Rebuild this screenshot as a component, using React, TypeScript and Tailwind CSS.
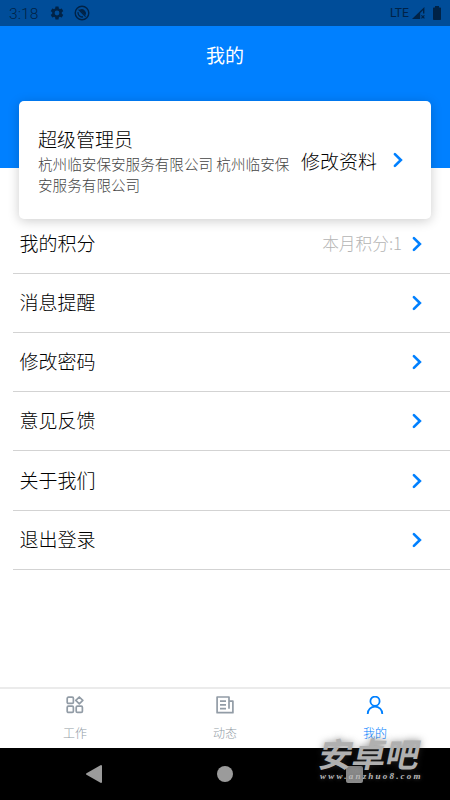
import clsx from "clsx";

const menuItems = [
  { name: "我的积分", extra: "本月积分:1" },
  { name: "消息提醒" },
  { name: "修改密码" },
  { name: "意见反馈" },
  { name: "关于我们" },
  { name: "退出登录" },
];

const Arrow = () => (
  <svg width="10" height="16" viewBox="0 0 10 16" fill="none" className="shrink-0">
    <path d="M1.9 2.1L7.9 8L1.9 13.9" stroke="#0080ff" strokeWidth="2.6" strokeLinecap="round" strokeLinejoin="miter" />
  </svg>
);

const StatusBar = () => (
  <div className="flex h-[26px] shrink-0 items-center bg-[#004d99] pl-[9px] pr-[8px] text-[#002347]">
    <span className="font-['Roboto',sans-serif] text-[15.5px] leading-[26px] tracking-[0.1px] pt-[2px]">3:18</span>
    <svg className="ml-[11px]" width="16" height="16" viewBox="0 0 24 24" fill="currentColor">
      <path d="M19.14 12.94c.04-.3.06-.61.06-.94 0-.32-.02-.64-.07-.94l2.03-1.58a.49.49 0 0 0 .12-.61l-1.92-3.32a.49.49 0 0 0-.59-.22l-2.39.96c-.5-.38-1.03-.7-1.62-.94l-.36-2.54a.48.48 0 0 0-.48-.41h-3.84a.47.47 0 0 0-.47.41l-.36 2.54c-.59.24-1.13.57-1.62.94l-2.39-.96a.48.48 0 0 0-.59.22L2.74 8.87a.48.48 0 0 0 .12.61l2.03 1.58c-.05.3-.09.63-.09.94s.02.64.07.94l-2.03 1.58a.49.49 0 0 0-.12.61l1.92 3.32c.12.22.37.29.59.22l2.39-.96c.5.38 1.03.7 1.62.94l.36 2.54c.05.24.24.41.48.41h3.84c.24 0 .44-.17.47-.41l.36-2.54c.59-.24 1.13-.56 1.62-.94l2.39.96c.22.08.47 0 .59-.22l1.92-3.32a.48.48 0 0 0-.12-.61l-2.01-1.58zM12 15.6A3.6 3.6 0 1 1 12 8.4a3.6 3.6 0 0 1 0 7.2z" />
    </svg>
    <svg className="ml-[9px]" width="16" height="16" viewBox="0 0 16 16" fill="none" stroke="currentColor">
      <circle cx="8" cy="8" r="6.8" strokeWidth="1.4" />
      <path d="M5.4 5A4.1 4.1 0 0 1 11.2 10.6Z" fill="currentColor" stroke="none" />
      <path d="M4.1 7.2a4 4 0 0 0 4.9 4.6" strokeWidth="1.4" />
      <path d="M4.6 4.6l7 7" strokeWidth="1.2" />
    </svg>
    <span className="ml-auto font-['Roboto',sans-serif] text-[12.2px] font-normal">LTE</span>
    <svg className="ml-[2px]" width="15" height="14" viewBox="0 0 15 14">
      <path d="M1 13L13.4 1V7.5H12V4.2L9.2 7V13Z" fill="currentColor" />
      <path d="M10.4 9.3l3 3m0-3l-3 3" stroke="currentColor" strokeWidth="1.2" />
    </svg>
    <svg className="ml-[6px]" width="10" height="14" viewBox="0 0 10 14" fill="currentColor">
      <path d="M3 0h4v1.5h1.3q.7 0 .7.7v11q0 .8-.8.8H1.8Q1 14 1 13.2v-11q0-.7.7-.7H3z" />
    </svg>
  </div>
);

const WorkIcon = () => (
  <svg width="18" height="18" viewBox="0 0 18 18" fill="none" stroke="currentColor" strokeWidth="1.7">
    <rect x="1.2" y="1.2" width="6.2" height="6.2" rx="1.2" />
    <rect x="1.2" y="10.2" width="6.2" height="6.2" rx="1.2" />
    <rect x="10.2" y="10.2" width="6.2" height="6.2" rx="1.2" />
    <path d="M13.3 1L16.8 4.4L13.3 7.8L9.8 4.4Z" strokeLinejoin="round" />
  </svg>
);

const NewsIcon = () => (
  <svg width="18" height="18" viewBox="0 0 18 18" fill="none" stroke="currentColor" strokeWidth="1.7">
    <path d="M13 12.8V1H1.1V16.7H16.9V5.2H13M4 5.2h6M4 8.9h6M4 12.6h6" strokeLinejoin="round" />
  </svg>
);

const MineIcon = () => (
  <svg width="18" height="18" viewBox="0 0 18 18" fill="none" stroke="currentColor" strokeWidth="1.8">
    <circle cx="9" cy="5.2" r="4.6" />
    <path d="M1.7 17.9a7.3 7.3 0 0 1 14.6 0" />
  </svg>
);

const tabs = [
  { name: "工作", icon: WorkIcon },
  { name: "动态", icon: NewsIcon },
  { name: "我的", icon: MineIcon, active: true },
];

export default function App() {
  return (
    <div className="relative flex h-[800px] w-[450px] flex-col overflow-hidden bg-white font-['Noto_Sans_CJK_SC',sans-serif] font-light text-black">
      <StatusBar />
      <header className="h-[142px] shrink-0 bg-[#0080ff] pt-[14px] text-center text-[19px] leading-[30px] font-normal text-white">
        我的
      </header>

      <section className="mx-[19px] -mt-[67px] flex h-[118px] shrink-0 items-center rounded-[5px] bg-white pl-[19px] pr-[28px] shadow-[0_2px_12px_rgba(0,0,0,0.2)]">
        <div className="w-[254px] shrink-0">
          <h2 className="text-[19px] leading-[27px]">超级管理员</h2>
          <p className="pt-px text-[14.6px] leading-[21px] text-[#444]">杭州临安保安服务有限公司 杭州临安保安服务有限公司</p>
        </div>
        <span className="ml-[9px] whitespace-nowrap pt-px text-[19px] leading-[28px]">修改资料</span>
        <div className="ml-auto flex">
          <Arrow />
        </div>
      </section>

      <ul className="-mt-[4.3px] flex flex-col pl-[13px]">
        {menuItems.map((item) => (
          <li key={item.name} className="flex h-[59.2px] items-center border-b border-[#d3d3d3] pl-[6.5px] pr-[28px]">
            <span className="pb-[2px] text-[19px] leading-[28px]">{item.name}</span>
            <span className="ml-auto mr-[10px] text-[16.7px] text-[#b4b4b4]">{item.extra}</span>
            <Arrow />
          </li>
        ))}
      </ul>

      <nav className="mt-auto grid h-[61px] shrink-0 grid-cols-3 border-t-2 border-[#ebebeb] pt-[7px]">
        {tabs.map(({ name, icon: Icon, active }) => (
          <div
            key={name}
            className={clsx("flex flex-col items-center", active ? "text-[#0080ff]" : "text-[#929ca6]")}
          >
            <Icon />
            <span className="mt-[10px] text-[12px] leading-[18px]">{name}</span>
          </div>
        ))}
      </nav>

      <div className="grid h-[52px] shrink-0 grid-cols-3 bg-black">
        <div className="flex justify-end pr-[47px] pt-[16px]">
          <svg width="18" height="20" viewBox="0 0 18 20">
            <path d="M2 10L16 2V18Z" fill="#9b9b9b" stroke="#9b9b9b" strokeWidth="2" strokeLinejoin="round" />
          </svg>
        </div>
        <div className="flex justify-center pt-[18px]">
          <div className="size-4 rounded-full bg-[#9b9b9b]" />
        </div>
        <div className="pl-[46px] pt-[18px]">
          <div className="size-[17px] rounded-[2px] bg-[#8d8d8d]" />
        </div>
      </div>

      {/* site watermark over the bottom bars */}
      <div className="absolute left-[320px] top-[735px] w-[106px]">
        <div className="-skew-x-12 whitespace-nowrap text-[33.5px] leading-[36px] font-bold text-[#b0b0b0] [text-shadow:0_0_7px_rgba(60,60,60,0.6)]">
          安卓吧
        </div>
        <div className="whitespace-nowrap font-['Liberation_Serif',serif] text-[9px] leading-[10px] font-bold italic tracking-[2.2px] text-[#bbb] [text-shadow:0_0_4px_rgba(90,90,90,0.8)]">
          www.anzhuo8.com
        </div>
      </div>
    </div>
  );
}
